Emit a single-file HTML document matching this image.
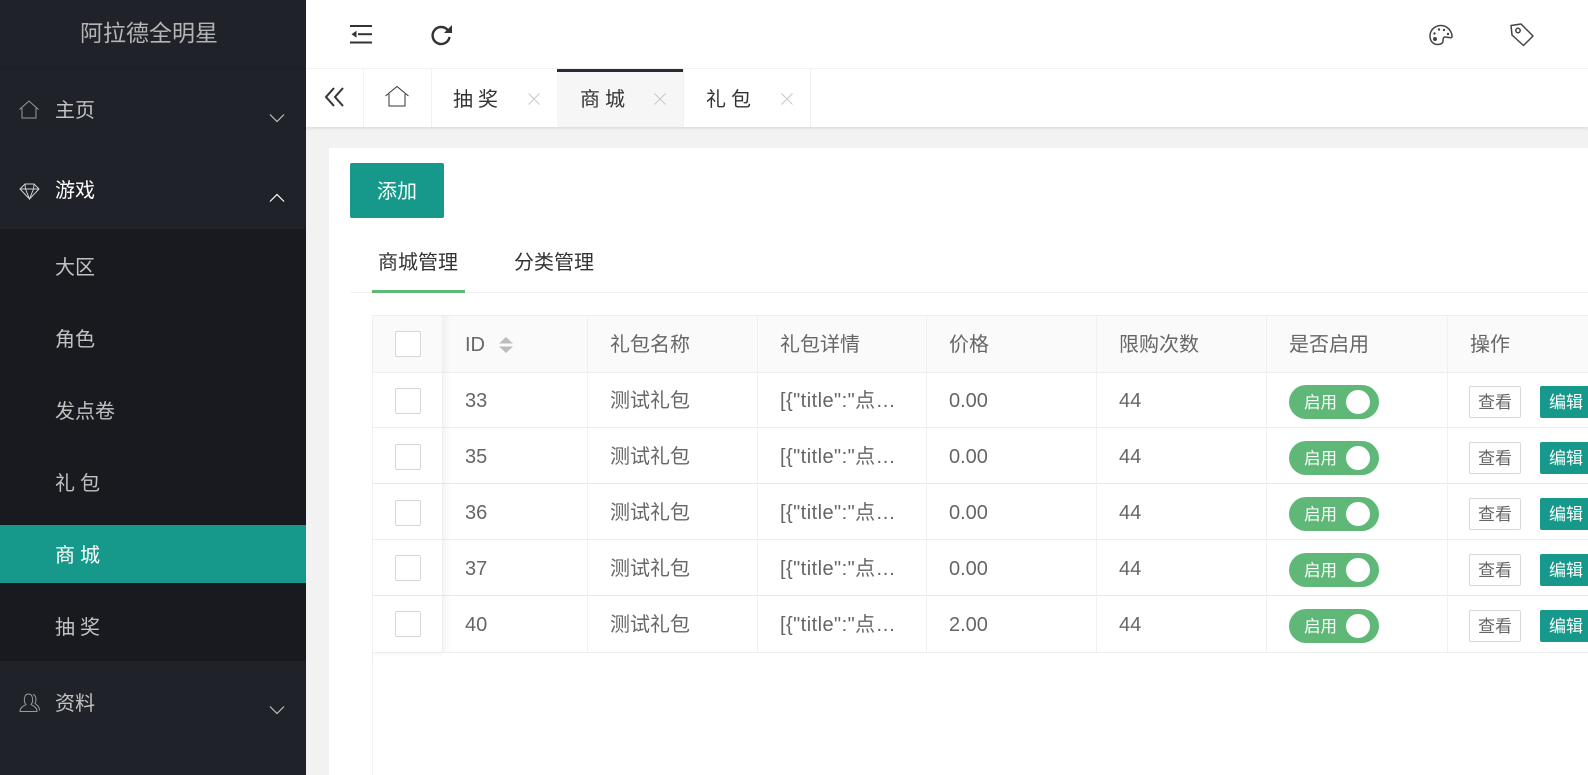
<!DOCTYPE html>
<html lang="zh"><head><meta charset="utf-8"><style>
*{box-sizing:border-box}
html,body{margin:0;padding:0;width:1588px;height:775px;overflow:hidden;background:#f2f2f2;font-family:"Liberation Sans","Noto Sans CJK SC",sans-serif;color:#666}
.a{position:absolute;white-space:nowrap}
#side{position:absolute;left:0;top:0;width:306px;height:775px;background:#20222a;z-index:5}
#sub{position:absolute;left:0;top:229px;width:306px;height:432px;background:#191a1f}
.m{position:absolute;left:55px;font-size:20px;line-height:30px;color:#c2c2c2;white-space:nowrap}
.tabt{position:absolute;top:85px;font-size:20px;line-height:30px;color:#333;white-space:nowrap}
.x{position:absolute;top:92px}
.vl{position:absolute;width:1px;background:#f0f0f0}
.th,.td{position:absolute;font-size:20px;line-height:30px;white-space:nowrap;color:#666}
.d{letter-spacing:.45px}
.hl{position:absolute;left:372px;width:1216px;height:1px;background:#eeeeee}
.cb{position:absolute;left:395px;width:26px;height:26px;background:#fff;border:1px solid #d8d8d8;border-radius:2px}
.sw{position:absolute;left:1289px;width:90px;height:34px;border-radius:17px;background:#5fb878}
.sw span{position:absolute;left:15px;top:5px;font-size:16.5px;line-height:26px;color:#fff}
.sw i{position:absolute;left:57px;top:5px;width:24px;height:24px;border-radius:12px;background:#fff}
.bv{position:absolute;left:1469px;width:52px;height:32px;background:#fff;border:1px solid #d8d8d8;border-radius:2px;font-size:17px;line-height:32px;text-align:center;color:#666}
.be{position:absolute;left:1540px;width:60px;height:32px;background:#16998a;border-radius:2px;font-size:17px;line-height:34px;padding-left:9px;color:#fff;white-space:nowrap}
</style></head><body>

<div id="side">
<div class="a" style="left:80px;top:15px;font-size:23px;line-height:36px;color:#b4b4b4;letter-spacing:0">阿拉德全明星</div>
<div class="a" style="left:0;top:68px;width:306px;height:1px;background:#1c1e25"></div>

<svg class="a" style="left:18px;top:99px" width="24" height="22" viewBox="0 0 24 22" fill="none" stroke="#9a9a9a" stroke-width="1"><path d="M1.5 10.5 L11 2 L20.5 10.5"/><path d="M4 9 V19 H18 V9"/></svg>
<div class="m" style="top:96px">主页</div>
<svg class="a" style="left:269px;top:113px" width="16" height="10" viewBox="0 0 16 10" fill="none" stroke="#c2c2c2" stroke-width="1.2"><path d="M1 1.5 L8 8.5 L15 1.5"/></svg>

<svg class="a" style="left:19px;top:181px" width="22" height="20" viewBox="0 0 22 20" fill="none" stroke="#d0d0d0" stroke-width="1"><path d="M6 3 H15 L20 8 L10.5 18 L1 8 Z"/><path d="M1 8 H20 M6.5 8 L10.5 18 L14.5 8 M6 3 L6.5 8 M15 3 L14.5 8"/></svg>
<div class="m" style="top:176px;color:#fff">游戏</div>
<svg class="a" style="left:269px;top:193px" width="16" height="10" viewBox="0 0 16 10" fill="none" stroke="#fff" stroke-width="1.2"><path d="M1 8.5 L8 1.5 L15 8.5"/></svg>

<div id="sub"></div>
<div class="a" style="left:0;top:525px;width:306px;height:58px;background:#16998a"></div>
<div class="m" style="top:253px">大区</div>
<div class="m" style="top:325px">角色</div>
<div class="m" style="top:397px">发点卷</div>
<div class="m" style="top:469px;letter-spacing:5px">礼包</div>
<div class="m" style="top:541px;color:#fff;letter-spacing:5px">商城</div>
<div class="m" style="top:613px;letter-spacing:5px">抽奖</div>

<svg class="a" style="left:18px;top:691px" width="24" height="22" viewBox="0 0 24 22" fill="none" stroke="#9a9a9a" stroke-width="1"><path d="M2 20.5 C2 16 6 15 8 13.5 C5.5 11 5.5 3 10.5 3 C15.5 3 15.5 11 13 13.5 C15 15 19 16 19 20.5 Z"/><path d="M15 3.5 C18.5 4 18.5 10 17 12.5 C19 14 21.5 15.5 21.5 19.5"/></svg>
<div class="m" style="top:689px">资料</div>
<svg class="a" style="left:269px;top:705px" width="16" height="10" viewBox="0 0 16 10" fill="none" stroke="#c2c2c2" stroke-width="1.2"><path d="M1 1.5 L8 8.5 L15 1.5"/></svg>
</div>

<div class="a" style="left:306px;top:0;width:1282px;height:127px;background:#fff;box-shadow:0 1px 3px rgba(0,0,0,.12)"></div>
<div class="a" style="left:306px;top:68px;width:1282px;height:1px;background:#f2f2f2"></div>

<svg class="a" style="left:349px;top:24px" width="24" height="22" viewBox="0 0 24 22" fill="#333"><rect x="1" y="1" width="22" height="2"/><rect x="1" y="17.5" width="22" height="2"/><rect x="9" y="9.2" width="14" height="2"/><path d="M7.5 6.7 V13.7 L2.5 10.2 Z"/></svg>
<svg class="a" style="left:429px;top:23px" width="24" height="24" viewBox="0 0 24 24" fill="none" stroke="#333" stroke-width="2.4"><path d="M19 7.5 A8.5 8.5 0 1 0 20.5 14"/><path d="M23 2 V10 H15 Z" fill="#333" stroke="none"/></svg>
<svg class="a" style="left:1428px;top:24px" width="26" height="22" viewBox="0 0 26 22" fill="none" stroke="#444" stroke-width="1.5"><path d="M2 12 C2 5 8 1.5 13 1.5 C19 1.5 24 7 24 12.5 C24 15 20 13 17.5 13 C15 13 15 15 15 17 C15 19 13 20.5 10 20.5 C5 20.5 2 17 2 12 Z"/><circle cx="7" cy="15" r="2" fill="#444" stroke="none"/><circle cx="6.5" cy="9.5" r="1.2" fill="#444" stroke="none"/><circle cx="11" cy="5.5" r="1.2" fill="#444" stroke="none"/><circle cx="16" cy="6" r="1.2" fill="#444" stroke="none"/><circle cx="20" cy="10" r="1.2" fill="#444" stroke="none"/></svg>
<svg class="a" style="left:1509px;top:22px" width="26" height="26" viewBox="0 0 26 26" fill="none" stroke="#444" stroke-width="1.5"><path d="M2 3.5 L12 2 L24 14 L14.5 23.5 L3 13 Z" stroke-linejoin="round"/><circle cx="9" cy="8.5" r="2.2"/></svg>

<div class="vl" style="left:363px;top:69px;height:58px"></div>
<div class="vl" style="left:431px;top:69px;height:58px"></div>
<div class="a" style="left:557px;top:69px;width:127px;height:58px;background:#f6f6f6"></div>
<div class="a" style="left:557px;top:69px;width:126px;height:3px;background:#292b34"></div>
<div class="vl" style="left:683px;top:69px;height:58px"></div>
<div class="vl" style="left:810px;top:69px;height:58px"></div>

<svg class="a" style="left:323px;top:85px" width="24" height="24" viewBox="0 0 24 24" fill="none" stroke="#333" stroke-width="2"><path d="M11 3 L3 12 L11 21 M20 3 L12 12 L20 21"/></svg>
<svg class="a" style="left:385px;top:85px" width="24" height="24" viewBox="0 0 24 24" fill="none" stroke="#333" stroke-width="1"><path d="M0.5 11 L12 1.5 L23.5 11"/><path d="M4 9 V21 H20 V9"/></svg>

<div class="tabt" style="left:453px;letter-spacing:5px">抽奖</div>
<div class="tabt" style="left:580px;letter-spacing:5px">商城</div>
<div class="tabt" style="left:706px;letter-spacing:5px">礼包</div>
<svg class="x" style="left:527px" width="14" height="14" viewBox="0 0 14 14" stroke="#c8c8c8" stroke-width="1"><path d="M1.5 1.5 L12.5 12.5 M12.5 1.5 L1.5 12.5"/></svg>
<svg class="x" style="left:653px" width="14" height="14" viewBox="0 0 14 14" stroke="#c8c8c8" stroke-width="1"><path d="M1.5 1.5 L12.5 12.5 M12.5 1.5 L1.5 12.5"/></svg>
<svg class="x" style="left:780px" width="14" height="14" viewBox="0 0 14 14" stroke="#c8c8c8" stroke-width="1"><path d="M1.5 1.5 L12.5 12.5 M12.5 1.5 L1.5 12.5"/></svg>

<div class="a" style="left:329px;top:148px;width:1259px;height:627px;background:#fff"></div>
<div class="a" style="left:350px;top:163px;width:94px;height:55px;background:#16998a;border-radius:2px;color:#fff;font-size:20px;line-height:59px;text-align:center">添加</div>

<div class="a" style="left:378px;top:248px;font-size:20px;line-height:30px;color:#333">商城管理</div>
<div class="a" style="left:514px;top:248px;font-size:20px;line-height:30px;color:#333">分类管理</div>
<div class="a" style="left:350px;top:292px;width:1238px;height:1px;background:#f0f0f0"></div>
<div class="a" style="left:372px;top:290px;width:93px;height:3px;background:#5fb878"></div>

<div class="a" style="left:372px;top:315px;width:1216px;height:57px;background:#fafafa"></div>
<div class="hl" style="top:315px"></div>
<div class="hl" style="top:372px"></div>
<div class="hl" style="top:427px"></div>
<div class="hl" style="top:483px;background:#e8e8e8"></div>
<div class="hl" style="top:539px"></div>
<div class="hl" style="top:595px;background:#e8e8e8"></div>
<div class="hl" style="top:652px"></div>

<div class="vl" style="left:372px;top:315px;height:460px"></div>
<div class="a" style="left:443px;top:315px;width:8px;height:337px;background:linear-gradient(to right,rgba(0,0,0,.035),rgba(0,0,0,0))"></div>
<div class="a" style="left:372px;top:653px;width:71px;height:5px;background:linear-gradient(to bottom,rgba(0,0,0,.025),rgba(0,0,0,0))"></div>
<div class="vl" style="left:442px;top:315px;height:337px"></div>
<div class="vl" style="left:587px;top:315px;height:337px"></div>
<div class="vl" style="left:757px;top:315px;height:337px"></div>
<div class="vl" style="left:926px;top:315px;height:337px"></div>
<div class="vl" style="left:1096px;top:315px;height:337px"></div>
<div class="vl" style="left:1266px;top:315px;height:337px"></div>
<div class="vl" style="left:1447px;top:315px;height:337px"></div>

<div class="cb" style="top:331px"></div>
<div class="th" style="left:465px;top:330px">ID</div>
<svg class="a" style="left:498px;top:336px" width="16" height="18" viewBox="0 0 16 18" fill="#bcbcbc"><path d="M8 1 L15 7.5 H1 Z M1 10.5 H15 L8 17 Z"/></svg>
<div class="th" style="left:610px;top:330px">礼包名称</div>
<div class="th" style="left:780px;top:330px">礼包详情</div>
<div class="th" style="left:949px;top:330px">价格</div>
<div class="th" style="left:1119px;top:330px">限购次数</div>
<div class="th" style="left:1289px;top:330px">是否启用</div>
<div class="th" style="left:1470px;top:330px">操作</div>

<div class="cb" style="top:388px"></div>
<div class="td" style="left:465px;top:386px">33</div>
<div class="td" style="left:610px;top:386px">测试礼包</div>
<div class="td d" style="left:780px;top:386px">[{"title":"点…</div>
<div class="td" style="left:949px;top:386px">0.00</div>
<div class="td" style="left:1119px;top:386px">44</div>
<div class="sw" style="top:385px"><span>启用</span><i></i></div>
<div class="bv" style="top:386px">查看</div>
<div class="be" style="top:386px">编辑</div>

<div class="cb" style="top:444px"></div>
<div class="td" style="left:465px;top:442px">35</div>
<div class="td" style="left:610px;top:442px">测试礼包</div>
<div class="td d" style="left:780px;top:442px">[{"title":"点…</div>
<div class="td" style="left:949px;top:442px">0.00</div>
<div class="td" style="left:1119px;top:442px">44</div>
<div class="sw" style="top:441px"><span>启用</span><i></i></div>
<div class="bv" style="top:442px">查看</div>
<div class="be" style="top:442px">编辑</div>

<div class="cb" style="top:500px"></div>
<div class="td" style="left:465px;top:498px">36</div>
<div class="td" style="left:610px;top:498px">测试礼包</div>
<div class="td d" style="left:780px;top:498px">[{"title":"点…</div>
<div class="td" style="left:949px;top:498px">0.00</div>
<div class="td" style="left:1119px;top:498px">44</div>
<div class="sw" style="top:497px"><span>启用</span><i></i></div>
<div class="bv" style="top:498px">查看</div>
<div class="be" style="top:498px">编辑</div>

<div class="cb" style="top:555px"></div>
<div class="td" style="left:465px;top:554px">37</div>
<div class="td" style="left:610px;top:554px">测试礼包</div>
<div class="td d" style="left:780px;top:554px">[{"title":"点…</div>
<div class="td" style="left:949px;top:554px">0.00</div>
<div class="td" style="left:1119px;top:554px">44</div>
<div class="sw" style="top:553px"><span>启用</span><i></i></div>
<div class="bv" style="top:554px">查看</div>
<div class="be" style="top:554px">编辑</div>

<div class="cb" style="top:611px"></div>
<div class="td" style="left:465px;top:610px">40</div>
<div class="td" style="left:610px;top:610px">测试礼包</div>
<div class="td d" style="left:780px;top:610px">[{"title":"点…</div>
<div class="td" style="left:949px;top:610px">2.00</div>
<div class="td" style="left:1119px;top:610px">44</div>
<div class="sw" style="top:609px"><span>启用</span><i></i></div>
<div class="bv" style="top:610px">查看</div>
<div class="be" style="top:610px">编辑</div>

</body></html>
